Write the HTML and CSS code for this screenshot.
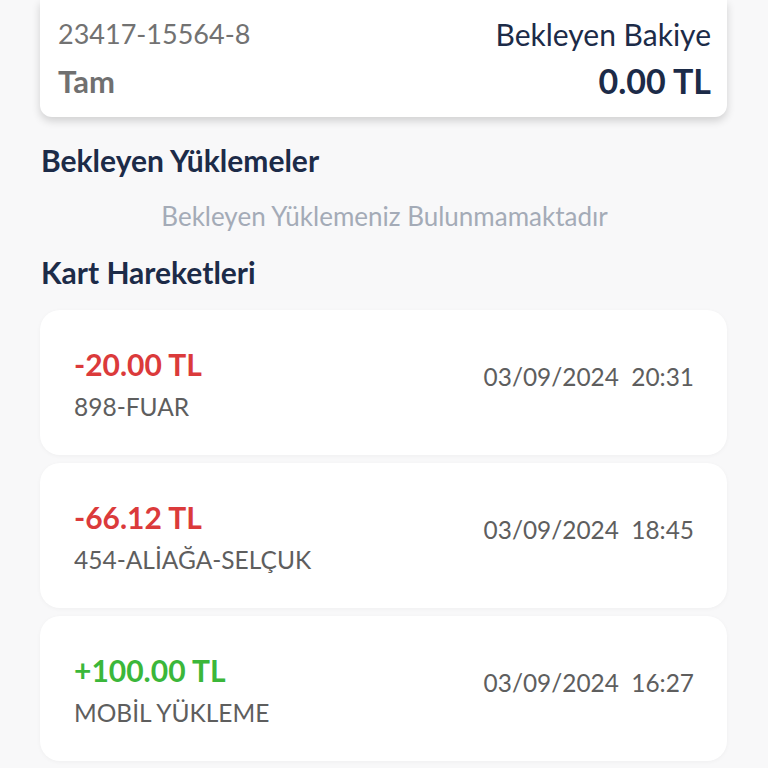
FILE: index.html
```html
<!DOCTYPE html>
<html lang="tr">
<head>
<meta charset="utf-8">
<link rel="stylesheet" href="styles.css">
</head>
<body>
<div class="page">
  <div class="balance-card">
    <div class="col">
      <div class="card-no">23417-15564-8</div>
      <div class="card-type">Tam</div>
    </div>
    <div class="col right">
      <div class="pending-label">Bekleyen Bakiye</div>
      <div class="pending-amount">0.00 TL</div>
    </div>
  </div>

  <h2 class="section-title first">Bekleyen Yüklemeler</h2>
  <div class="empty">Bekleyen Yüklemeniz Bulunmamaktadır</div>

  <h2 class="section-title">Kart Hareketleri</h2>

  <div class="tx-list">
    <div class="tx">
      <div class="tx-left">
        <div class="amount neg">-20.00 TL</div>
        <div class="route">898-FUAR</div>
      </div>
      <div class="date">03/09/2024&nbsp;&nbsp;20:31</div>
    </div>
    <div class="tx">
      <div class="tx-left">
        <div class="amount neg">-66.12 TL</div>
        <div class="route">454-ALİAĞA-SELÇUK</div>
      </div>
      <div class="date">03/09/2024&nbsp;&nbsp;18:45</div>
    </div>
    <div class="tx">
      <div class="tx-left">
        <div class="amount pos">+100.00 TL</div>
        <div class="route">MOBİL YÜKLEME</div>
      </div>
      <div class="date">03/09/2024&nbsp;&nbsp;16:27</div>
    </div>
  </div>
</div>
</body>
</html>
```

FILE: styles.css
```css
* { box-sizing: border-box; }
html, body {
  margin: 0;
  padding: 0;
  background: #f8f8f9;
  font-family: "Lato", "Noto Sans", sans-serif;
}
.page {
  width: 768px;
  height: 768px;
  overflow: hidden;
  padding: 0 41px 0 40px;
}
.balance-card {
  background: #fff;
  border-radius: 0 0 12px 12px;
  box-shadow: 0 4px 8px rgba(0, 0, 0, 0.16);
  padding: 15px 16px 17px 18px;
  display: flex;
  justify-content: space-between;
}
.col {
  display: flex;
  flex-direction: column;
  gap: 9px;
}
.col.right { align-items: flex-end; }
.card-no {
  font-size: 27px;
  line-height: 38px;
  color: #727272;
}
.card-type {
  font-size: 31px;
  font-weight: 700;
  line-height: 38px;
  color: #707070;
}
.pending-label {
  font-size: 30px;
  line-height: 38px;
  color: #1c2b48;
}
.pending-amount {
  font-size: 34px;
  font-weight: 700;
  line-height: 38px;
  color: #1c2b48;
}
.section-title {
  margin: 26px 0 0 1px;
  font-size: 30px;
  font-weight: 700;
  line-height: 30px;
  color: #1c2b48;
}
.section-title.first { margin-top: 28px; }
.empty {
  margin-top: 26px;
  text-align: center;
  font-size: 26px;
  line-height: 30px;
  color: #a4abb7;
  padding-left: 2px;
}
.tx-list {
  margin-top: 23px;
  display: flex;
  flex-direction: column;
  gap: 8px;
}
.tx {
  height: 145px;
  background: #fff;
  border-radius: 20px;
  box-shadow: 0 1px 4px rgba(0, 0, 0, 0.04);
  padding: 39px 33px 0 34px;
  display: flex;
  justify-content: space-between;
  align-items: flex-start;
}
.tx-left {
  display: flex;
  flex-direction: column;
  gap: 13px;
}
.amount {
  font-size: 30px;
  font-weight: 700;
  line-height: 30px;
}
.amount.neg { color: #db3a3b; }
.amount.pos { color: #3bb73a; }
.route {
  font-size: 24.5px;
  line-height: 30px;
  color: #5e5e5e;
}
.date {
  margin-top: 13px;
  font-size: 24.4px;
  line-height: 30px;
  color: #5e5e5e;
}
```
